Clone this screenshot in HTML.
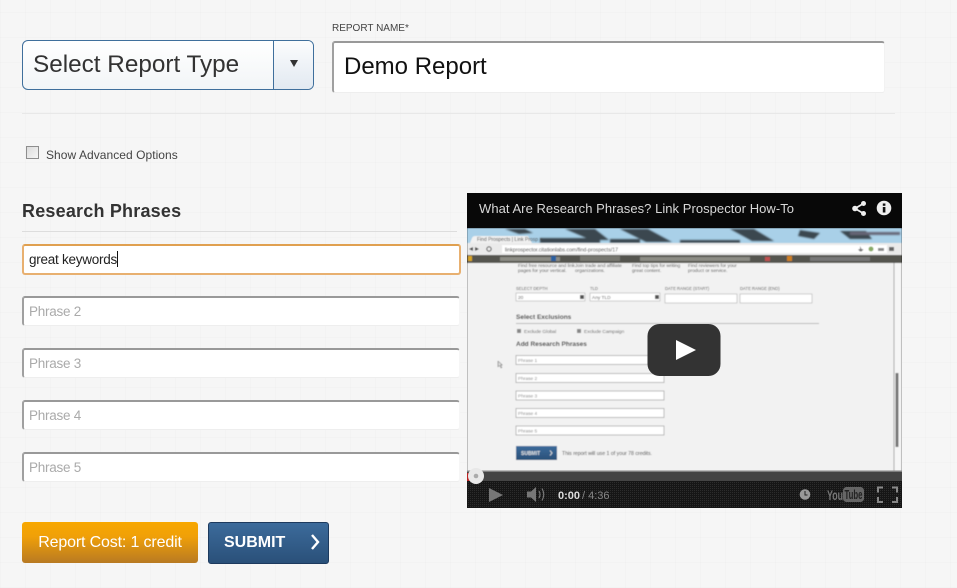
<!DOCTYPE html>
<html><head><meta charset="utf-8"><style>
html,body{margin:0;padding:0}
body{width:957px;height:588px;overflow:hidden;position:relative;font-family:"Liberation Sans",sans-serif;background-color:#f6f6f6;background-image:repeating-linear-gradient(90deg,rgba(0,0,0,.012) 0 1px,transparent 1px 25px),repeating-linear-gradient(0deg,rgba(0,0,0,.012) 0 1px,transparent 1px 25px)}
.a{position:absolute;box-sizing:border-box}
.t{position:absolute;white-space:nowrap}
.in{position:absolute;box-sizing:border-box;left:22px;width:438px;height:30px;background:#fff;border-top:2px solid #999;border-left:2px solid #a0a0a0;border-right:1px solid #f6f6f6;border-bottom:1px solid #eee;border-radius:3px;font-size:13.500px;letter-spacing:-.25px;line-height:27px;padding-left:5px;color:#aaa}
</style></head><body>
<div class="a" style="left:22px;top:40px;width:292px;height:50px;border:1px solid #3f6f9c;border-radius:6px;background:linear-gradient(#fff,#f2f5f7)"></div>
<div class="a" style="left:273px;top:41px;width:40px;height:48px;border-left:1px solid #3f6f9c;border-radius:0 5px 5px 0;background:linear-gradient(#fbfcfd,#e2e9f1)"></div>
<div class="a" style="left:290px;top:60px;width:0;height:0;border-left:4px solid transparent;border-right:4px solid transparent;border-top:7px solid #333"></div>
<div class="t" style="left:33px;top:50px;font-size:24.300px;line-height:29px;color:#333">Select Report Type</div>
<div class="t" style="left:332px;top:22px;font-size:10px;line-height:13px;color:#444">REPORT NAME*</div>
<div class="a" style="left:332px;top:41px;width:553px;height:52px;background:#fff;border-top:2px solid #999;border-left:2px solid #a0a0a0;border-right:1px solid #f2f2f2;border-bottom:1px solid #eee;border-radius:3px"></div>
<div class="t" style="left:344px;top:52px;font-size:24px;line-height:29px;color:#111">Demo Report</div>
<div class="a" style="left:22px;top:113px;width:873px;height:1px;background:#e8e8e8"></div>
<div class="a" style="left:26px;top:146px;width:13px;height:13px;border:1px solid #8e8e8e;background:linear-gradient(135deg,#dcdcdc,#f6f6f6)"></div>
<div class="t" style="left:46px;top:148px;font-size:12px;line-height:15px;color:#444;letter-spacing:.05px">Show Advanced Options</div>
<div class="t" style="left:22px;top:201px;font-size:18px;line-height:21px;font-weight:bold;color:#333;letter-spacing:.2px">Research Phrases</div>
<div class="a" style="left:22px;top:231px;width:435px;height:1px;background:#ddd"></div>
<div class="in" style="top:244px;width:439px;height:31px;border:2px solid #e8b070;border-top:2px solid #e0a050;color:#222;line-height:27px">great keywords<span style="display:inline-block;width:1px;height:16px;background:#111;vertical-align:-3px"></span></div>
<div class="in" style="top:296px">Phrase 2</div>
<div class="in" style="top:348px">Phrase 3</div>
<div class="in" style="top:400px">Phrase 4</div>
<div class="in" style="top:452px">Phrase 5</div>
<div class="a" style="left:22px;top:522px;width:176px;height:41px;border-radius:3px;background:linear-gradient(#f8a800,#f0a008 35%,#b87a22);text-align:center;color:#fff;font-size:16px;letter-spacing:-.15px;line-height:41px">Report Cost: 1 credit</div>
<div class="a" style="left:208px;top:522px;width:121px;height:42px;border-radius:3px;border:1px solid #1d3a5e;background:linear-gradient(#3c6b9b,#2a5079)"></div>
<div class="t" style="left:224px;top:533px;font-size:16px;line-height:19px;font-weight:bold;color:#fff">SUBMIT</div>
<svg class="a" style="left:309px;top:533px" width="12" height="18" viewBox="0 0 12 18"><path d="M3 2l6 7-6 7" fill="none" stroke="#fff" stroke-width="2.400"/></svg>

<svg class="a" style="left:467px;top:193px" width="435" height="315" viewBox="467 193 435 315" font-family="Liberation Sans, sans-serif">
<defs>
<pattern id="ck" width="2" height="2" patternUnits="userSpaceOnUse"><rect width="2" height="2" fill="#161616"/><rect width="1" height="1" fill="#2c2c2c"/></pattern>
<linearGradient id="sb" x1="0" y1="0" x2="0" y2="1"><stop offset="0" stop-color="#3c6b9b"/><stop offset="1" stop-color="#2a5079"/></linearGradient>
<filter id="bl"><feGaussianBlur stdDeviation=".9"/></filter>
<filter id="b2" x="0" y="0" width="100%" height="100%"><feGaussianBlur stdDeviation=".45"/></filter>
</defs>
<rect x="467" y="193" width="435" height="315" fill="#000"/>
<rect x="467" y="193" width="435" height="35" fill="#080808"/>
<text x="479" y="213" font-size="13" fill="#d8d8d8" textLength="315">What Are Research Phrases? Link Prospector How-To</text>
<g fill="#eee"><circle cx="855" cy="208.500" r="2.800"/><circle cx="863.500" cy="203.500" r="2.500"/><circle cx="863.500" cy="213.500" r="2.500"/></g>
<path d="M855 208.500L863.500 203.500M855 208.500L863.500 213.500" stroke="#eee" stroke-width="1.800"/>
<circle cx="884" cy="208" r="7.300" fill="#eee"/><rect x="882.800" y="207" width="2.600" height="5.500" fill="#111"/><rect x="882.800" y="203.500" width="2.600" height="2.300" fill="#111"/>

<g filter="url(#b2)">
<rect x="467" y="228" width="435" height="243" fill="#f2f2f2"/>
<rect x="467" y="228" width="435" height="17" fill="#a9d0e8"/>
<g filter="url(#bl)" fill="#3a4650">
<path d="M505 229l20 0 8 4-14 1zM565 229l30 0 14 11-18 0zM620 229l28 0 24 13-26 0zM730 229l24 0 20 12-22 0zM800 230l20 3-6 6-16-3zM840 231l26 0 6 8-22 0z"/>
<rect x="540" y="238" width="60" height="5"/><rect x="610" y="239" width="30" height="4"/><rect x="680" y="240" width="60" height="3"/><rect x="850" y="232" width="50" height="3" fill="#667"/>
</g>
<path d="M470 243l2-5q1-2 3-2h53l4 7z" fill="#f1f1f1"/>
<text x="477" y="241" font-size="5" fill="#444">Find Prospects | Link Prosp ×</text>
<rect x="467" y="243" width="435" height="12" fill="#eaeaea"/>
<rect x="502" y="245" width="385" height="8" fill="#fff"/>
<path d="M469 249l4-2v4zM479 249l-4-2v4z" fill="#444"/><circle cx="489" cy="249" r="2.200" fill="none" stroke="#444"/>
<text x="505" y="251.500" font-size="5.200" fill="#333" textLength="113">linkprospector.citationlabs.com/find-prospects/17</text>
<circle cx="871" cy="249" r="2.500" fill="#8a6"/><rect x="878" y="248" width="6" height="3" fill="#888"/><rect x="889" y="247" width="5" height="4" fill="#666"/><path d="M860 246l1.500 3 2 .5-2 2-1.500 0-2-2 2-.5z" fill="#777"/>
<rect x="467" y="255" width="435" height="8" fill="#55554f"/>
<rect x="500" y="257" width="60" height="4" fill="#8c8c84"/><rect x="580" y="256" width="40" height="5" fill="#77776f"/><rect x="640" y="257" width="110" height="4" fill="#8c8c84"/><rect x="810" y="257" width="60" height="4" fill="#777"/>
<rect x="468" y="256" width="4" height="5" fill="#d9a520"/><rect x="551" y="256" width="5" height="5" fill="#2a60a0"/><rect x="765" y="257" width="5" height="4" fill="#c05050"/><rect x="787" y="256" width="5" height="5" fill="#d08020"/>
<rect x="893.500" y="263" width="1" height="208" fill="#aaa"/><rect x="895" y="263" width="5" height="208" fill="#f6f6f6"/><rect x="895.500" y="373" width="3" height="74" fill="#777"/>

<g font-size="4.800" fill="#555">
<text x="518" y="267">Find free resource and link</text><text x="518" y="272">pages for your vertical.</text>
<text x="575" y="267">Join trade and affiliate</text><text x="575" y="272">organizations.</text>
<text x="632" y="267">Find top tips for writing</text><text x="632" y="272">great content.</text>
<text x="688" y="267">Find reviewers for your</text><text x="688" y="272">product or service.</text>
<text x="516" y="290" font-size="4.200">SELECT DEPTH</text><text x="590" y="290" font-size="4.200">TLD</text><text x="665" y="290" font-size="4.200">DATE RANGE (START)</text><text x="740" y="290" font-size="4.200">DATE RANGE (END)</text>
</g>
<g fill="#fff" stroke="#bbb" stroke-width=".7"><rect x="516" y="293" width="69" height="8"/><rect x="590" y="293" width="70" height="8"/><rect x="665" y="294" width="72" height="9"/><rect x="740" y="294" width="72" height="9"/></g>
<rect x="580" y="295" width="4" height="4" fill="#555"/><rect x="655" y="295" width="4" height="4" fill="#555"/>
<g font-size="4.800" fill="#555"><text x="518" y="299">20</text><text x="592" y="299">Any TLD</text></g>
<text x="516" y="319" font-size="6.500" font-weight="bold" fill="#333">Select Exclusions</text>
<rect x="516" y="323" width="303" height="1" fill="#bbb"/>
<rect x="517" y="329" width="4" height="4" fill="#888"/><rect x="577" y="329" width="4" height="4" fill="#888"/>
<g font-size="4.800" fill="#666"><text x="524" y="333">Exclude Global</text><text x="584" y="333">Exclude Campaign</text></g>
<text x="516" y="346" font-size="6.500" font-weight="bold" fill="#333">Add Research Phrases</text>
<g fill="#fff" stroke="#aaa" stroke-width=".8"><rect x="516" y="355.500" width="148" height="9"/><rect x="516" y="373.500" width="148" height="9"/><rect x="516" y="391" width="148" height="9"/><rect x="516" y="408.500" width="148" height="9"/><rect x="516" y="426" width="148" height="9"/></g>
<g font-size="4.800" fill="#888"><text x="518" y="362">Phrase 1</text><text x="518" y="380">Phrase 2</text><text x="518" y="397.500">Phrase 3</text><text x="518" y="415">Phrase 4</text><text x="518" y="432.500">Phrase 5</text></g>
<rect x="516" y="446" width="41" height="14" fill="url(#sb)"/>
<text x="521" y="455" font-size="5" font-weight="bold" fill="#e8e8e8">SUBMIT</text>
<path d="M550 450.500l2 2.500-2 2.500" fill="none" stroke="#ddd"/>
<text x="562" y="455" font-size="5.200" fill="#444" textLength="90">This report will use 1 of your 78 credits.</text>
<path d="M498 361v6l1.500-1.500 1.500 2.500 1-.5-1.500-2.500h2z" fill="#ddd" stroke="#555" stroke-width=".5"/>
</g>

<rect x="647.500" y="324" width="73" height="52" rx="12" fill="#333"/>
<path d="M676 340l20 10-20 10z" fill="#fff"/>

<rect x="467" y="471" width="435" height="10" fill="#444"/>
<rect x="467" y="470.500" width="435" height="1.200" fill="#999"/>
<rect x="467" y="481" width="435" height="27" fill="url(#ck)"/>
<rect x="467" y="473" width="4" height="8" fill="#b22"/>
<circle cx="476" cy="476" r="8" fill="#e8e8e8"/><circle cx="476" cy="476" r="2.300" fill="#aaa"/>
<path d="M489 488l14 7-14 7z" fill="#777"/>
<path d="M527 491.500h4l5-4.500v15l-5-4.500h-4z" fill="#777"/>
<path d="M539 491q2 3.500 0 7M542 488.500q3.500 6 0 12" fill="none" stroke="#777" stroke-width="1.200"/>
<text x="558" y="499" font-size="11" font-weight="bold" fill="#ddd">0:00</text>
<text x="582" y="499" font-size="11" fill="#888">/ 4:36</text>
<circle cx="805" cy="494.500" r="5.300" fill="#999"/><path d="M805 491v4h2.500" fill="none" stroke="#222"/>
<text x="827" y="500" font-size="14" font-weight="bold" fill="#777" textLength="16" lengthAdjust="spacingAndGlyphs">You</text>
<rect x="843" y="487" width="21" height="15" rx="3.500" fill="#666"/>
<text x="844.500" y="499" font-size="13" font-weight="bold" fill="#222" textLength="18" lengthAdjust="spacingAndGlyphs">Tube</text>
<path d="M878 492.500v-5h5M892 487.500h5v5M897 497v5h-5M883 502h-5v-5" fill="none" stroke="#888" stroke-width="2"/>
</svg>
</body></html>
